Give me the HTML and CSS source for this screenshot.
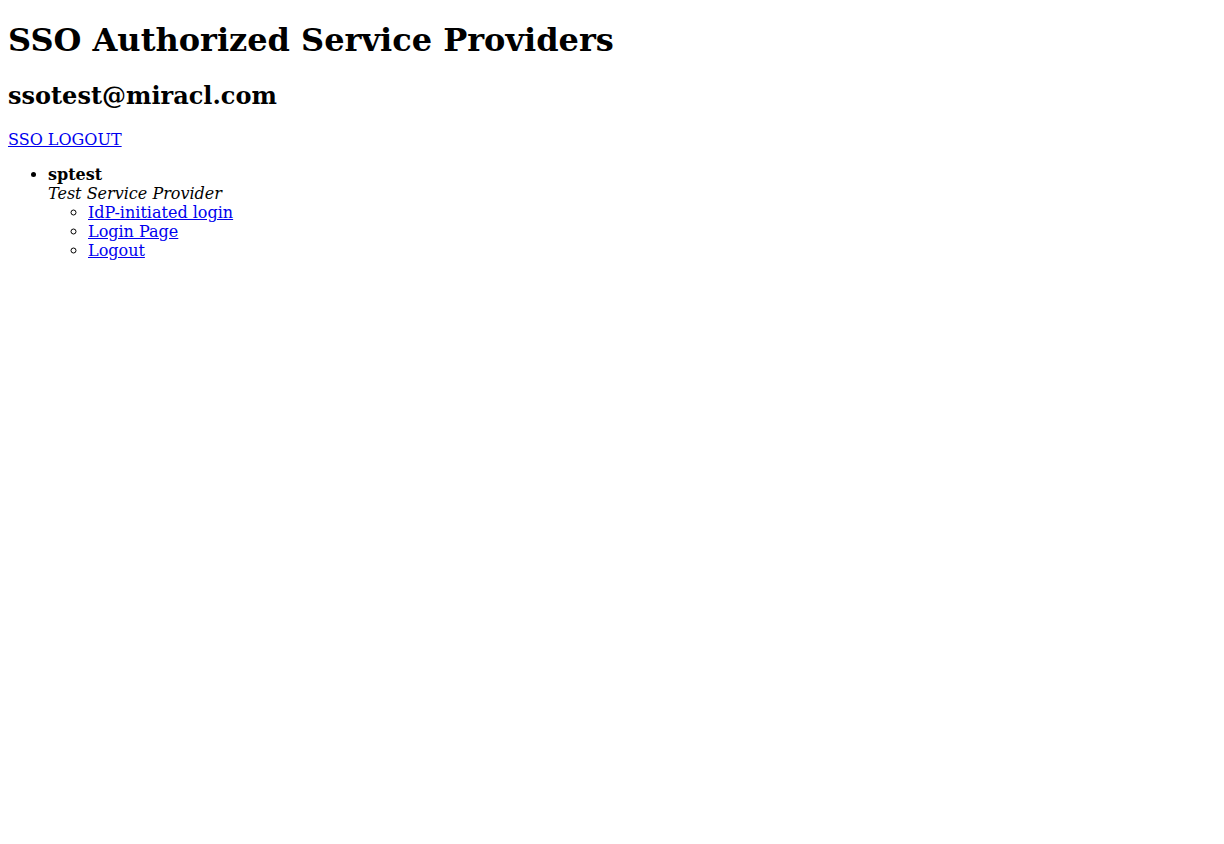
FILE: index.html
```html
<!DOCTYPE html>
<html>
<head>
<meta charset="utf-8">
<title>SSO Authorized Service Providers</title>
<link rel="stylesheet" href="styles.css">
</head>
<body class="page">
<h1>SSO Authorized Service Providers</h1>
<h2>ssotest@miracl.com</h2>
<p><a href="#">SSO LOGOUT</a></p>
<ul>
  <li><b>sptest</b><br><i>Test Service Provider</i>
    <ul>
      <li><a href="#">IdP-initiated login</a></li>
      <li><a href="#">Login Page</a></li>
      <li><a href="#">Logout</a></li>
    </ul>
  </li>
</ul>
</body>
</html>
```

FILE: styles.css
```css
.page {
  font-family: "DejaVu Serif", serif;
  background: #fff;
  color: #000;
  margin: 0 8px 8px 8px;
  text-rendering: optimizeLegibility;
  font-kerning: normal;
}
```
